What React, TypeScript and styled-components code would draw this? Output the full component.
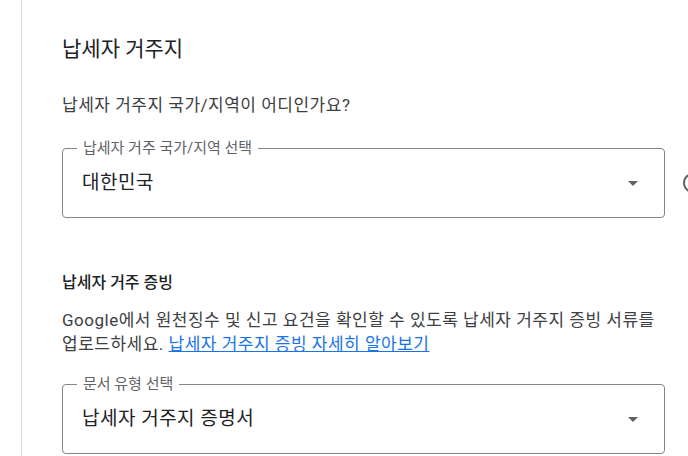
import React from 'react';
import styled, { createGlobalStyle } from 'styled-components';

const GlobalStyle = createGlobalStyle`
  html, body {
    margin: 0;
    padding: 0;
    background: #ffffff;
    overflow: hidden;
  }
  body {
    font-family: Roboto, "Noto Sans CJK KR", "Noto Sans", sans-serif;
    color: #3c4043;
    word-break: keep-all;
  }
`;

const Page = styled.div`
  box-sizing: border-box;
  height: 456px;
  padding-left: 21px;
  width: 900px;
`;

const Card = styled.div`
  border-left: 1px solid #dadce0;
  box-sizing: border-box;
  height: 100%;
  padding: 35px 0 0 40px;
`;

const Heading = styled.h1`
  color: #202124;
  font-size: 21px;
  font-weight: 400;
  line-height: 28px;
  margin: 0 0 30px;
`;

const Question = styled.p`
  font-size: 17px;
  letter-spacing: 0.5px;
  line-height: 24px;
  margin: 0 0 31px;
`;

const FieldRow = styled.div`
  align-items: center;
  display: flex;
  gap: 16px;
`;

const Outlined = styled.div`
  align-items: center;
  border: 1px solid #80868b;
  border-radius: 4px;
  box-sizing: border-box;
  display: flex;
  height: 70px;
  justify-content: space-between;
  padding: 0 26px 0 19px;
  position: relative;
  width: 603px;
`;

const FloatLabel = styled.span`
  background: #ffffff;
  color: #5f6368;
  font-size: 15px;
  left: 14px;
  line-height: 16px;
  padding: 0 6px;
  position: absolute;
  top: -9px;
`;

const Value = styled.span`
  color: #202124;
  font-size: 19px;
  letter-spacing: 0.5px;
  line-height: 24px;
`;

const Arrow = styled.span`
  border-left: 5px solid transparent;
  border-right: 5px solid transparent;
  border-top: 5px solid #5f6368;
  height: 0;
  width: 0;
`;

const HelpIcon = styled.svg`
  flex-shrink: 0;
  fill: #5f6368;
  height: 24px;
  width: 24px;
`;

const SubHeading = styled.h2`
  color: #202124;
  font-size: 16px;
  font-weight: 500;
  line-height: 24px;
  margin: 53px 0 13px;
`;

const Paragraph = styled.p`
  font-size: 17px;
  letter-spacing: 0.5px;
  line-height: 24px;
  margin: 0 0 28px;
  width: 603px;
`;

const Link = styled.a`
  color: #1a73e8;
  text-decoration: underline;
`;

interface SelectFieldProps {
  label: string;
  value: string;
}

const SelectField: React.FC<SelectFieldProps> = ({ label, value }) => (
  <Outlined>
    <FloatLabel>{label}</FloatLabel>
    <Value>{value}</Value>
    <Arrow />
  </Outlined>
);

const App: React.FC = () => (
  <Page>
    <GlobalStyle />
    <Card>
      <Heading>납세자 거주지</Heading>
      <Question>납세자 거주지 국가/지역이 어디인가요?</Question>
      <FieldRow>
        <SelectField label="납세자 거주 국가/지역 선택" value="대한민국" />
        <HelpIcon viewBox="0 0 24 24">
          <path d="M11 18h2v-2h-2v2zm1-16C6.48 2 2 6.48 2 12s4.48 10 10 10 10-4.48 10-10S17.52 2 12 2zm0 18c-4.41 0-8-3.59-8-8s3.59-8 8-8 8 3.59 8 8-3.59 8-8 8zm0-14c-2.21 0-4 1.79-4 4h2c0-1.1.9-2 2-2s2 .9 2 2c0 2-3 1.75-3 5h2c0-2.25 3-2.5 3-5 0-2.21-1.79-4-4-4z" />
        </HelpIcon>
      </FieldRow>
      <SubHeading>납세자 거주 증빙</SubHeading>
      <Paragraph>
        Google에서 원천징수 및 신고 요건을 확인할 수 있도록 납세자 거주지 증빙 서류를
        업로드하세요. <Link href="#">납세자 거주지 증빙 자세히 알아보기</Link>
      </Paragraph>
      <SelectField label="문서 유형 선택" value="납세자 거주지 증명서" />
    </Card>
  </Page>
);

export default App;
